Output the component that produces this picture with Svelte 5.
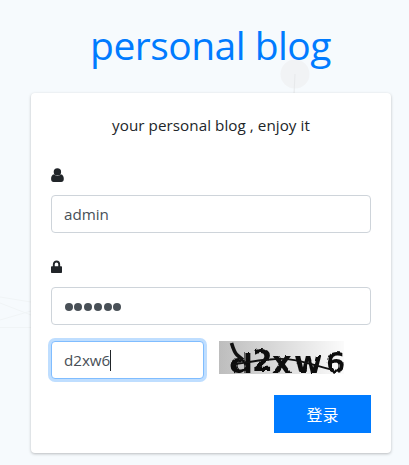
<script>
  let username = $state('admin');
  let password = $state('123456');
  let code = $state('d2xw6');
</script>

<main>
  <svg class="particles" width="409" height="465" aria-hidden="true">
    <circle cx="295" cy="74" r="14.5" fill="#f1f3f5" />
    <path d="M295 74L294 94" stroke="#e7e9eb" />
    <path d="M0 297L31 302M0 303L31 315M0 320L31 311M0 327.500H31" stroke="#f0f4f6" fill="none" />
  </svg>

  <h1><span>personal blog</span></h1>

  <form class="card" onsubmit={(e) => e.preventDefault()}>
    <p><span>your personal blog , enjoy it</span></p>

    <label for="user">
      <svg width="13" height="14" viewBox="0 0 13 14" aria-label="Username">
        <ellipse cx="6.400" cy="3.900" rx="3.700" ry="3.700" />
        <path d="M3.200 6.200C.8 6.500.1 8.700.1 11C.1 12.900 1 14 2.600 14H10.200C11.800 14 12.800 12.900 12.800 11C12.800 8.700 12.100 6.500 9.700 6.200C7.800 8.500 5.100 8.500 3.200 6.200Z" />
      </svg>
    </label>
    <input id="user" bind:value={username} />

    <label for="pass">
      <svg width="11" height="14" viewBox="0 0 11 14" aria-label="Password">
        <path d="M2.800 7V4.300C2.800.5 8.200.5 8.200 4.300V7" fill="none" stroke="#212529" stroke-width="1.900" />
        <rect y="6.200" width="11" height="6.900" rx=".8" />
      </svg>
    </label>
    <div class="field password" role="img" aria-label="Password, {password.length} characters">
      {#each password as _}<i></i>{/each}
    </div>

    <div class="verify">
      <div class="field focused"><span>{code}</span><b class="caret"></b></div>
      <svg class="captcha" width="125" height="33" viewBox="0 0 125 33">
        <defs>
          <linearGradient id="shade">
            <stop offset="0" stop-color="#bdbdbd" />
            <stop offset="1" stop-color="#fbfbfb" />
          </linearGradient>
          <filter id="rough" x="-5%" y="-20%" width="110%" height="140%">
            <feTurbulence type="fractalNoise" baseFrequency=".35 .06" numOctaves="1" seed="7" />
            <feDisplacementMap in="SourceGraphic" scale="3.500" xChannelSelector="R" yChannelSelector="G" />
            <feGaussianBlur stdDeviation=".45" />
          </filter>
        </defs>
        <rect width="125" height="33" fill="url(#shade)" />
        <g filter="url(#rough)">
          <text transform="translate(10 31.500) scale(1.250 1)">d</text>
          <text transform="translate(33 30) scale(1.100 1.130)">2</text>
          <text transform="translate(53 32) scale(1.130 1.100)">x</text>
          <text transform="translate(75 32) scale(1.130 1.130)">w</text>
          <text transform="translate(106 31.500) scale(1.080 1.080)">6</text>
        </g>
        <path d="M12.500 2C14 7 16 12 18 14L24 19" fill="none" stroke="#111" stroke-width="3.600" />
        <path d="M12 24C25 22 39 19 51 18.500C76 15.500 92 24 114 29" fill="none" stroke="#111" stroke-width="1.800" />
      </svg>
    </div>

    <div class="actions"><button type="submit">登录</button></div>
  </form>
</main>

<style>
  :global(body) { margin: 0; }
  main {
    position: relative;
    box-sizing: border-box;
    width: 409px;
    height: 465px;
    padding: 21px 18px 0 31px;
    background: #f6fafd;
    color: #212529;
    font: 15.200px/24px "Open Sans", "Noto Sans", "Noto Sans CJK SC", sans-serif;
    overflow: hidden;
  }
  .particles { position: absolute; inset: 0; }
  h1 {
    position: relative;
    margin: 0 1px 24px 0;
    height: 48px;
    color: #007bff;
    font-size: 39px;
    font-weight: 400;
    line-height: 48px;
    letter-spacing: -.52px;
    text-align: center;
    white-space: nowrap;
  }
  .card {
    position: relative;
    box-sizing: border-box;
    width: 360px;
    height: 360px;
    padding: 20px;
    border-radius: 4px;
    background: #fff;
    box-shadow: 0 1px 3px rgba(0, 0, 0, .25);
  }
  p { margin: 0 0 30px; height: 24px; text-align: center; letter-spacing: .06px; white-space: nowrap; }
  label { display: flex; height: 14px; margin-bottom: 13px; padding-top: 1px; }
  label svg { fill: #212529; }
  input, .field {
    box-sizing: border-box;
    display: flex;
    align-items: center;
    width: 100%;
    height: 38px;
    margin: 0 0 26px;
    padding: 0 12px;
    border: 1px solid #ced4da;
    border-radius: 4px;
    background: #fff;
    color: #495057;
    font: inherit;
    letter-spacing: -.05px;
    outline: none;
  }
  .password { gap: 1.800px; margin-bottom: 16px; padding: 2px 12px 0 12.500px; }
  .password i { width: 8px; height: 8px; border-radius: 50%; background: #495057; }
  .verify { display: flex; gap: 15px; height: 38px; margin-bottom: 16px; }
  .focused {
    width: 153px;
    margin: 0;
    border-color: #80bdff;
    box-shadow: 0 0 0 3px #bfdeff;
  }
  .caret { width: 1px; height: 21px; background: #212529; }
  .captcha { overflow: visible; }
  .captcha text { font: bold 27px "DejaVu Sans", sans-serif; fill: #111; }
  .actions { display: flex; justify-content: flex-end; }
  button {
    width: 97px;
    height: 38px;
    padding: 0;
    border: 0;
    background: #007bff;
    color: #fff;
    font: 400 16px/36px "Noto Sans CJK SC", sans-serif;
  }
</style>
